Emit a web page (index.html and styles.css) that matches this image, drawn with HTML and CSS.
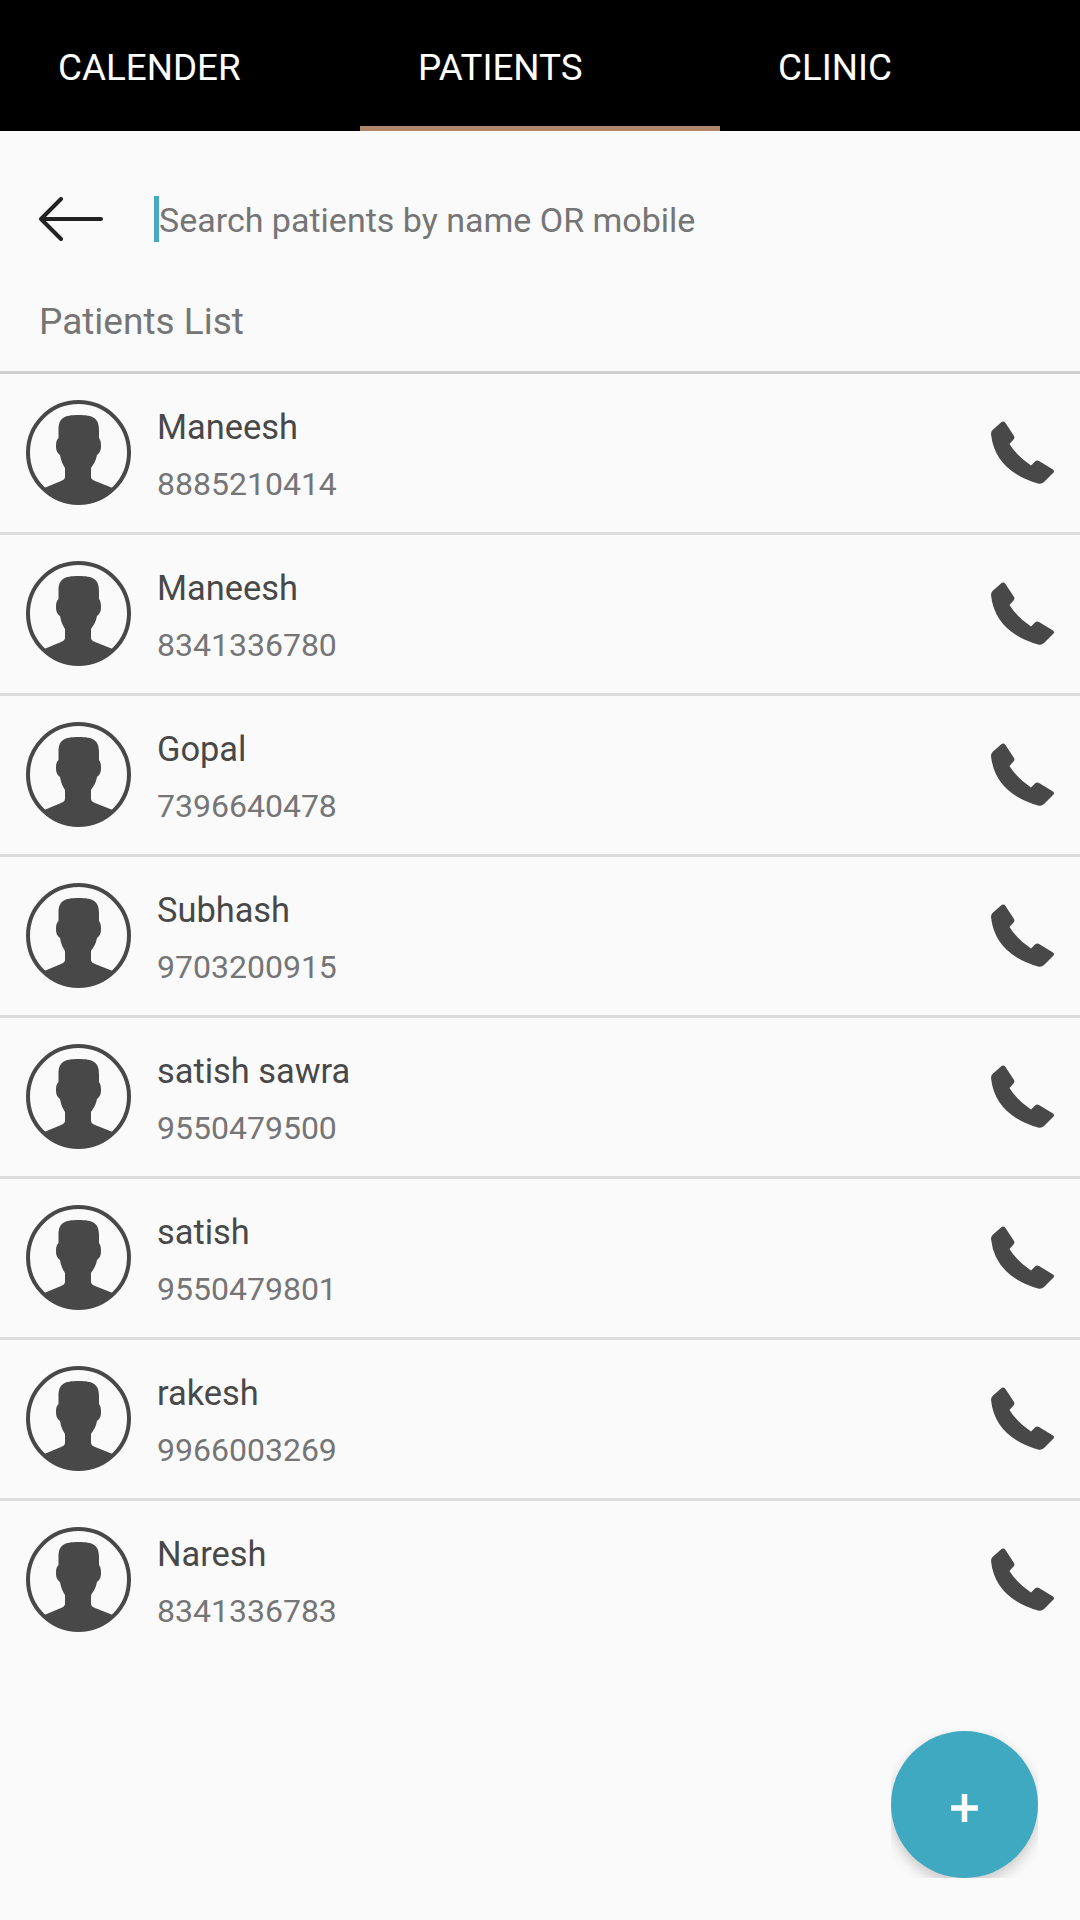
FILE: index.html
```html
<!DOCTYPE html>
<html lang="en">
<head>
    <meta charset="UTF-8">
    <meta name="viewport" content="width=device-width, initial-scale=1.0">
    <title>Patients</title>
    <link rel="stylesheet" href="styles.css">
</head>
<body>
    <svg class="defs" width="0" height="0">
        <defs>
            <symbol id="avatar" viewBox="0 0 105 105">
                <circle cx="52.5" cy="52.5" r="50.5" fill="none" stroke="#484848" stroke-width="4"/>
                <path fill="#484848" d="M52.5 15 C38 15 32.5 18 32.5 30 L32.5 38 C30.5 40 30 42 30 46 C30 51 31.5 53 34 55 C35 61 37 65 39 68 L39 77 C39 79 37 80 35 81 L17 88.5 A50.5 50.5 0 0 0 88 88.5 L69 81 C67 80 65 79 65 77 L65 68 C67 65 70 61 71 55 C73.5 53 75 51 75 46 C75 42 74.5 40 73 38 L73 30 C73 18 67 15 52.5 15 Z"/>
            </symbol>
            <symbol id="phone" viewBox="0 0 64 64">
                <path fill="#484848" d="M10 1.5 Q12.5 -0.5 14.5 2 L23 15 Q24 17 22.5 18.5 L18.5 23 Q25 34 40 44.5 L44 40.5 Q46 39 48 40 L62 48.5 Q64 50 62 52 L53 61 Q50.5 63.5 47 62.5 Q4 50 0 13 Q0 10.5 1.5 9 Z"/>
            </symbol>
        </defs>
    </svg>

    <div class="tabs">
        <div class="tab">CALENDER</div>
        <div class="tab active">PATIENTS</div>
        <div class="tab">CLINIC</div>
    </div>

    <div class="search">
        <svg class="back" width="64" height="44" viewBox="0 0 64 44">
            <path d="M22 2 L2 22 L22 42 M2 22 L62 22" fill="none" stroke="#222" stroke-width="4" stroke-linecap="round" stroke-linejoin="round"/>
        </svg>
        <span class="caret"></span>
        <span class="placeholder">Search patients by name OR mobile</span>
    </div>

    <div class="list-title">Patients List</div>

    <div class="list">
        <div class="row">
            <svg class="avatar"><use href="#avatar"/></svg>
            <div class="info"><div class="name">Maneesh</div><div class="mobile">8885210414</div></div>
            <svg class="call"><use href="#phone"/></svg>
        </div>
        <div class="row">
            <svg class="avatar"><use href="#avatar"/></svg>
            <div class="info"><div class="name">Maneesh</div><div class="mobile">8341336780</div></div>
            <svg class="call"><use href="#phone"/></svg>
        </div>
        <div class="row">
            <svg class="avatar"><use href="#avatar"/></svg>
            <div class="info"><div class="name">Gopal</div><div class="mobile">7396640478</div></div>
            <svg class="call"><use href="#phone"/></svg>
        </div>
        <div class="row">
            <svg class="avatar"><use href="#avatar"/></svg>
            <div class="info"><div class="name">Subhash</div><div class="mobile">9703200915</div></div>
            <svg class="call"><use href="#phone"/></svg>
        </div>
        <div class="row">
            <svg class="avatar"><use href="#avatar"/></svg>
            <div class="info"><div class="name">satish sawra</div><div class="mobile">9550479500</div></div>
            <svg class="call"><use href="#phone"/></svg>
        </div>
        <div class="row">
            <svg class="avatar"><use href="#avatar"/></svg>
            <div class="info"><div class="name">satish</div><div class="mobile">9550479801</div></div>
            <svg class="call"><use href="#phone"/></svg>
        </div>
        <div class="row">
            <svg class="avatar"><use href="#avatar"/></svg>
            <div class="info"><div class="name">rakesh</div><div class="mobile">9966003269</div></div>
            <svg class="call"><use href="#phone"/></svg>
        </div>
        <div class="row">
            <svg class="avatar"><use href="#avatar"/></svg>
            <div class="info"><div class="name">Naresh</div><div class="mobile">8341336783</div></div>
            <svg class="call"><use href="#phone"/></svg>
        </div>
    </div>

    <div class="fab-box">
        <div class="fab">
            <svg class="plus" width="27" height="28" viewBox="0 0 27 28"><path d="M13.5 0 V28 M0 14 H27" stroke="#fff" stroke-width="5.5"/></svg>
        </div>
    </div>
</body>
</html>
```

FILE: styles.css
```css
html, body {
    margin: 0;
    padding: 0;
}
body {
    position: relative;
    width: 1080px;
    height: 1920px;
    overflow: hidden;
    font-family: Roboto, "Liberation Sans", sans-serif;
    background-color: #fafafa;
}
.defs {
    display: block;
    height: 0;
}
.tabs {
    display: flex;
    height: 131px;
    background-color: #000;
}
.tab {
    width: 360px;
    box-sizing: border-box;
    height: 131px;
    padding: 47px 0 0 58px;
    font-size: 36.8px;
    line-height: 41px;
    color: #fff;
}
.tab.active {
    border-bottom: 5px solid #b0866a;
}
.search {
    display: flex;
    align-items: center;
    height: 175px;
    padding-left: 39px;
}
.back {
    flex: none;
}
.caret {
    flex: none;
    width: 5px;
    height: 46px;
    margin-left: 51px;
    background-color: #45a9bf;
}
.placeholder {
    margin: 2px 0 0 0;
    font-size: 34px;
    color: #757575;
}
.list-title {
    height: 65px;
    padding-left: 39px;
    font-size: 37px;
    line-height: 31px;
    color: #757575;
}
.list {
    border-top: 3px solid #cfcfcf;
}
.row {
    display: flex;
    align-items: center;
    box-sizing: border-box;
    height: 161px;
    padding: 0 25px 0 26px;
    border-bottom: 3px solid #dcdcdc;
}
.row:last-child {
    border-bottom-color: transparent;
}
.avatar {
    flex: none;
    width: 105px;
    height: 105px;
    margin-bottom: 2px;
}
.info {
    flex: 1;
    margin-left: 26px;
    padding-top: 3px;
}
.name {
    font-size: 34.4px;
    line-height: 40px;
    color: #484848;
}
.mobile {
    margin-top: 18px;
    font-size: 32px;
    line-height: 38px;
    color: #757575;
}
.call {
    flex: none;
    width: 64px;
    height: 64px;
}
/* the shadow is cut off by the square box, same as the reference */
.fab-box {
    position: absolute;
    left: 891px;
    top: 1731px;
    width: 147px;
    height: 147px;
    overflow: hidden;
}
.fab {
    display: flex;
    align-items: center;
    justify-content: center;
    width: 147px;
    height: 147px;
    border-radius: 50%;
    background-color: #40a9c2;
    box-shadow: 0 6px 14px rgba(0,0,0,0.2);
}
.plus {
    margin: 6px 1px 0 0;
}
```
